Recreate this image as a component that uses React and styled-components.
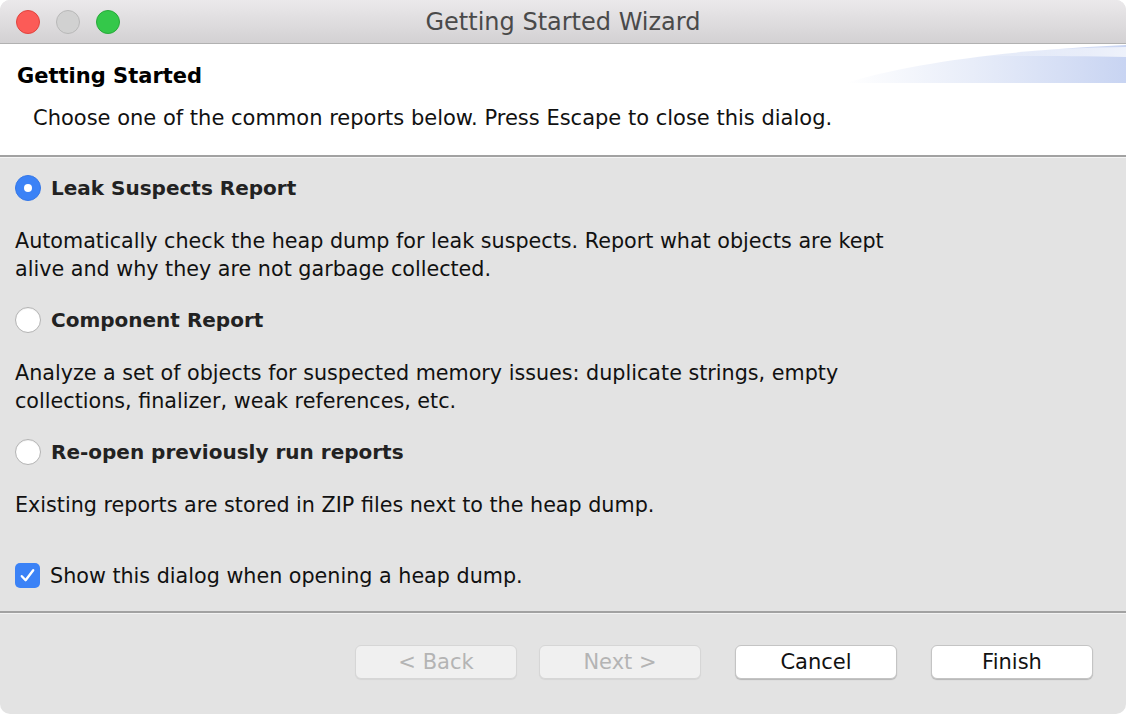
import React, { useState } from 'react'
import styled, { createGlobalStyle } from 'styled-components'

const GlobalStyle = createGlobalStyle`
    html, body {
        margin: 0;
        padding: 0;
        background: #ffffff;
    }
    body {
        font-family: "DejaVu Sans", "Liberation Sans", sans-serif;
    }
`;

const Window = styled.div`
    width: 1126px;
    height: 714px;
    display: flex;
    flex-direction: column;
    border-radius: 10px;
    overflow: hidden;
    background-color: #e3e3e3;
`;

const TitleBar = styled.div`
    height: 43px;
    flex-shrink: 0;
    display: flex;
    align-items: center;
    position: relative;
    background: linear-gradient(to bottom, #ebe9eb, #d3d1d3);
    border-bottom: 1px solid #b1b1b1;
`;

const Lights = styled.div`
    display: flex;
    gap: 16px;
    padding-left: 16px;
`;

const Light = styled.span`
    width: 22px;
    height: 22px;
    border-radius: 50%;
    background-color: ${p => p.fill};
    border: 1px solid ${p => p.edge};
`;

const WindowTitle = styled.div`
    position: absolute;
    left: 0;
    right: 0;
    text-align: center;
    font-size: 24px;
    color: #4a4a4a;
    pointer-events: none;
`;

const Header = styled.div`
    height: 113px;
    flex-shrink: 0;
    background-color: #ffffff;
    position: relative;
    padding: 18px 0 0 17px;
    box-sizing: border-box;
    border-bottom: 2px solid #a2a2a2;
`;

const Swoosh = styled.svg`
    position: absolute;
    right: 0;
    top: 0;
`;

const PageTitle = styled.h1`
    margin: 0;
    font-size: 21px;
    line-height: 28px;
    font-weight: bold;
    color: #000000;
`;

const PageDesc = styled.p`
    margin: 15px 0 0 16px;
    font-size: 21px;
    line-height: 26px;
    color: #111111;
`;

const Body = styled.div`
    flex: 1;
    display: flex;
    flex-direction: column;
    padding: 14px 15px 0 15px;
    border-top: 1px solid #f4f4f4;
    border-bottom: 2px solid #a2a2a2;
`;

const Option = styled.div`
    display: flex;
    align-items: center;
    gap: 10px;
    height: 32px;
    cursor: default;
`;

const Radio = styled.span`
    width: 26px;
    height: 26px;
    box-sizing: border-box;
    border-radius: 50%;
    display: flex;
    align-items: center;
    justify-content: center;
    background: ${p => (p.checked ? '#3b82f6' : '#ffffff')};
    border: 1px solid ${p => (p.checked ? '#3477e8' : '#b3b3b3')};
    box-shadow: ${p => (p.checked ? 'none' : 'inset 0 1px 1px rgba(0,0,0,0.05)')};

    &::after {
        content: '';
        display: ${p => (p.checked ? 'block' : 'none')};
        width: 8px;
        height: 8px;
        border-radius: 50%;
        background: #ffffff;
    }
`;

const OptionLabel = styled.span`
    font-size: 20px;
    font-weight: bold;
    color: #222222;
`;

const OptionDesc = styled.p`
    margin: 24px 0 21px 0;
    font-size: 20.7px;
    line-height: 27.5px;
    color: #111111;
    max-width: 900px;
`;

const CheckRow = styled.label`
    display: flex;
    align-items: center;
    gap: 10px;
    height: 32px;
    margin-top: 19px;
    font-size: 20.7px;
    color: #111111;
`;

const CheckBox = styled.span`
    width: 25px;
    height: 25px;
    border-radius: 5px;
    background: #3b82f6;
    display: flex;
    align-items: center;
    justify-content: center;
`;

const Footer = styled.div`
    height: 101px;
    flex-shrink: 0;
    box-sizing: border-box;
    border-top: 1px solid #f2f2f2;
    display: flex;
    justify-content: flex-end;
    align-items: flex-start;
    padding: 31px 33px 0 0;
`;

const Button = styled.button`
    width: 162px;
    height: 34px;
    margin-left: ${p => p.gap}px;
    border-radius: 6px;
    font-family: "DejaVu Sans", "Liberation Sans", sans-serif;
    font-size: 21px;
    background: ${p => (p.disabled ? '#f0f0f0' : '#ffffff')};
    color: ${p => (p.disabled ? '#b4b4b4' : '#111111')};
    border: 1px solid ${p => (p.disabled ? '#d6d6d6' : '#c4c4c4')};
    box-shadow: 0 1px 1px ${p => (p.disabled ? 'rgba(0,0,0,0.06)' : 'rgba(0,0,0,0.2)')};
    padding: 0;
`;

const options = [
    {
        label: 'Leak Suspects Report',
        desc: 'Automatically check the heap dump for leak suspects. Report what objects are kept alive and why they are not garbage collected.',
    },
    {
        label: 'Component Report',
        desc: 'Analyze a set of objects for suspected memory issues: duplicate strings, empty collections, finalizer, weak references, etc.',
    },
    {
        label: 'Re-open previously run reports',
        desc: 'Existing reports are stored in ZIP files next to the heap dump.',
    },
];

function App() {
    const [selected, setSelected] = useState(0);

    return (
        <>
            <GlobalStyle />
            <Window>
                <TitleBar>
                    <Lights>
                        <Light fill="#fc5b57" edge="#e0443e" />
                        <Light fill="#d1d1d1" edge="#b8b8b8" />
                        <Light fill="#34c84a" edge="#28a93a" />
                    </Lights>
                    <WindowTitle>Getting Started Wizard</WindowTitle>
                </TitleBar>
                <Header>
                    <Swoosh width="280" height="40" viewBox="0 0 280 40">
                        <defs>
                            <linearGradient id="sw" x1="0" y1="0" x2="1" y2="0">
                                <stop offset="0" stopColor="#ffffff" />
                                <stop offset="0.45" stopColor="#e8edf9" />
                                <stop offset="1" stopColor="#c8d4f2" />
                            </linearGradient>
                            <linearGradient id="sw2" x1="0" y1="0" x2="1" y2="0">
                                <stop offset="0" stopColor="#ffffff" stopOpacity="0" />
                                <stop offset="1" stopColor="#ffffff" stopOpacity="0.7" />
                            </linearGradient>
                        </defs>
                        <path d="M0 39 C 60 20, 160 6, 280 1 L 280 39 Z" fill="url(#sw)" />
                        <path d="M120 12 C 170 6, 230 4, 280 3 L 280 13 C 230 12, 170 12, 120 12 Z" fill="url(#sw2)" />
                    </Swoosh>
                    <PageTitle>Getting Started</PageTitle>
                    <PageDesc>Choose one of the common reports below. Press Escape to close this dialog.</PageDesc>
                </Header>
                <Body>
                    {options.map((o, i) => (
                        <div key={o.label}>
                            <Option onClick={() => setSelected(i)}>
                                <Radio checked={selected === i} />
                                <OptionLabel>{o.label}</OptionLabel>
                            </Option>
                            <OptionDesc>{o.desc}</OptionDesc>
                        </div>
                    ))}
                    <CheckRow>
                        <CheckBox>
                            <svg width="19" height="19" viewBox="0 0 16 16">
                                <path d="M3.2 8.6 L6.4 12 L12.8 3.6" fill="none" stroke="#ffffff" strokeWidth="2" strokeLinecap="round" strokeLinejoin="round" />
                            </svg>
                        </CheckBox>
                        Show this dialog when opening a heap dump.
                    </CheckRow>
                </Body>
                <Footer>
                    <Button disabled gap={0}>&lt; Back</Button>
                    <Button disabled gap={22}>Next &gt;</Button>
                    <Button gap={34}>Cancel</Button>
                    <Button gap={34}>Finish</Button>
                </Footer>
            </Window>
        </>
    )
}

export default App
